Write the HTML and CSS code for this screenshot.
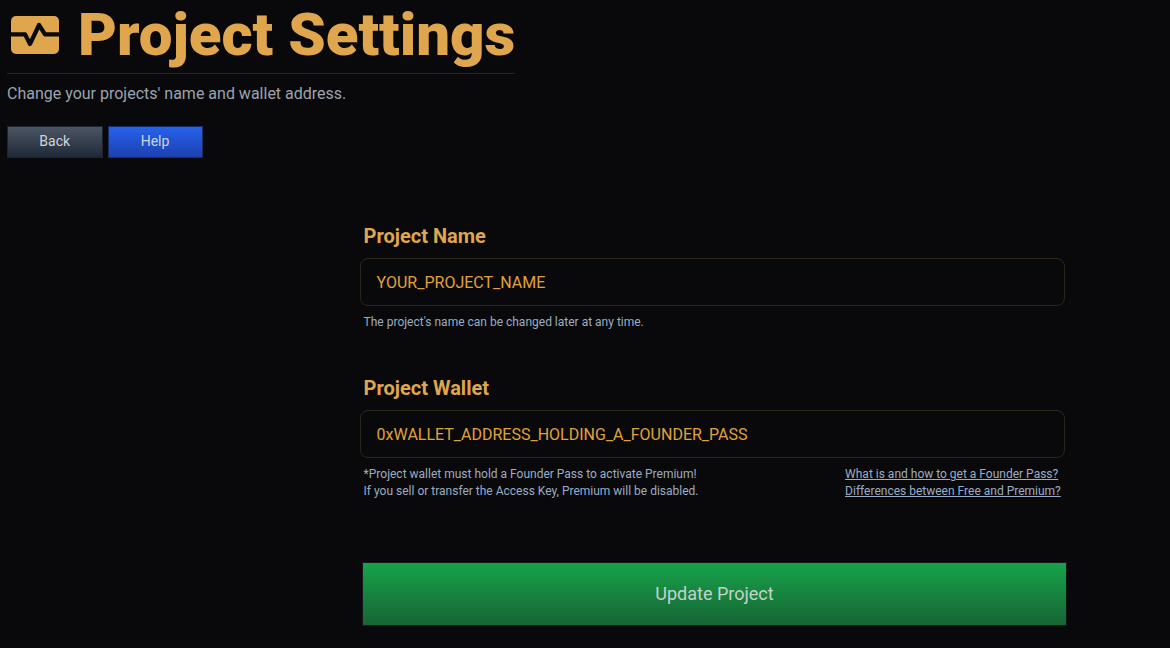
FILE: index.html
```html
<!DOCTYPE html>
<html lang="en">
<head>
<meta charset="utf-8">
<title>Project Settings</title>
<link rel="stylesheet" href="styles.css">
</head>
<body>
<header class="head">
  <h1 class="title">
    <svg class="title-icon" viewBox="0 0 48 38" aria-hidden="true">
      <rect width="48" height="38" rx="5" fill="#dfa64e"/>
      <path d="M-1 18.3H14L19 28L28 9L34 18.3H49" fill="none" stroke="#08090c" stroke-width="4.2" stroke-linejoin="round"/>
    </svg>
    <span>Project Settings</span>
  </h1>
  <p class="subtitle">Change your projects' name and wallet address.</p>
</header>
<nav class="actions">
  <a class="btn btn-grey">Back</a>
  <a class="btn btn-blue">Help</a>
</nav>
<main class="form">
  <section class="field field-name">
    <label class="label">Project Name</label>
    <div class="input">YOUR_PROJECT_NAME</div>
    <p class="hint">The project's name can be changed later at any time.</p>
  </section>
  <section class="field field-wallet">
    <label class="label">Project Wallet</label>
    <div class="input">0xWALLET_ADDRESS_HOLDING_A_FOUNDER_PASS</div>
    <div class="hint-row">
      <p class="hint">*Project wallet must hold a Founder Pass to activate Premium!<br>If you sell or transfer the Access Key, Premium will be disabled.</p>
      <p class="hint links"><a href="#">What is and how to get a Founder Pass?</a><br><a href="#">Differences between Free and Premium?</a></p>
    </div>
  </section>
  <button class="submit" type="button">Update Project</button>
</main>
</body>
</html>
```

FILE: styles.css
```css
* { box-sizing: border-box; }
html, body { margin: 0; height: 100%; }
body {
  background: #09090b;
  font-family: Roboto, "Liberation Sans", sans-serif;
  color: #9ca3af;
  overflow: hidden;
}
.head {
  width: 508px;
  margin-left: 7px;
}
.title {
  display: flex;
  align-items: center;
  gap: 19px;
  margin: 0;
  height: 74px;
  padding: 0 0 4px 4px;
  border-bottom: 1px solid #2c2618;
  color: #dfa64e;
  font-size: 60px;
  font-weight: 900;
  line-height: 70px;
  white-space: nowrap;
}
.title-icon { width: 48px; height: 38px; flex: none; }
.subtitle {
  margin: 10px 0 0;
  font-size: 16px;
  line-height: 20px;
  white-space: nowrap;
}
.actions {
  display: flex;
  gap: 5px;
  margin: 22px 0 0 7px;
}
.btn {
  width: 95.5px;
  height: 32px;
  padding-bottom: 2px;
  display: flex;
  align-items: center;
  justify-content: center;
  font-size: 14px;
  color: #d1d5db;
  border: 1px solid #1f2530;
}
.btn-grey { background: linear-gradient(#4b5563, #1f2937); }
.btn-blue { width: 95px; background: linear-gradient(#2563eb, #1e40af); border-color: #1a2c66; }
.form {
  width: 707px;
  margin: 66px 0 0 359.6px;
}
.label {
  display: block;
  margin-left: 4px;
  color: #dfa64e;
  font-size: 20px;
  font-weight: 700;
  line-height: 24px;
}
.input {
  width: 705px;
  height: 48px;
  margin-top: 10px;
  padding: 0 16px;
  display: flex;
  align-items: center;
  border: 1px solid #2c2618;
  border-radius: 8px;
  color: #e0a23c;
  font-size: 16px;
}
.hint {
  margin: 0;
  font-size: 12px;
  line-height: 17px;
  color: #9badc4;
}
.field > .hint, .hint-row { margin: 8px 0 0 4px; }
.field-wallet { margin-top: 45px; }
.hint-row {
  display: flex;
  justify-content: space-between;
  width: 697px;
}
.links { width: 215.5px; white-space: nowrap; }
.links a { color: #9badc4; }
.submit {
  display: block;
  width: 704.2px;
  height: 64px;
  margin: 62px 0 0 2.8px;
  padding-bottom: 3px;
  border: 1px solid #14181c;
  background: linear-gradient(#16a34a, #166534);
  color: #c3d3cb;
  font-family: inherit;
  font-size: 18px;
}
```
